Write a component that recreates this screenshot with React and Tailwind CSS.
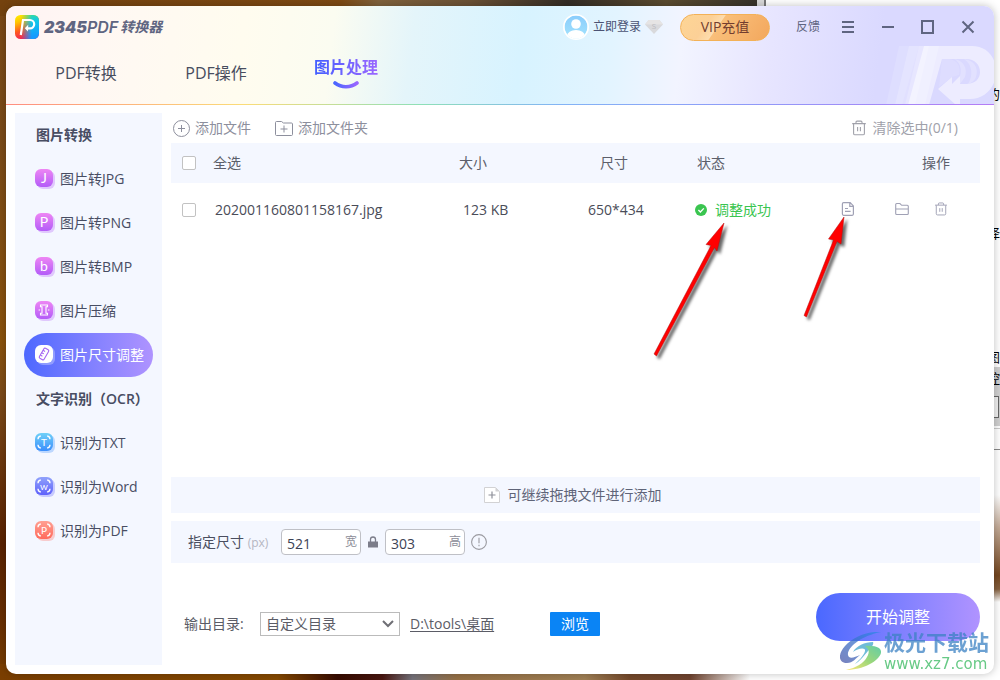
import { useState } from 'react';
import clsx from 'clsx';

const imageTools = [
    { id: 'jpg', label: '图片转JPG', glyph: 'J', from: '#ee86f4', to: '#b35cf8' },
    { id: 'png', label: '图片转PNG', glyph: 'P', from: '#ee86f4', to: '#b35cf8' },
    { id: 'bmp', label: '图片转BMP', glyph: 'b', from: '#ee86f4', to: '#b35cf8' },
    { id: 'compress', label: '图片压缩', glyph: 'compress', from: '#ee86f4', to: '#b35cf8' },
    { id: 'resize', label: '图片尺寸调整', glyph: 'ruler', from: '#ffffff', to: '#ffffff' },
];

const ocrTools = [
    { id: 'txt', label: '识别为TXT', glyph: 'T', from: '#6fd0f8', to: '#3b8efc', frame: true },
    { id: 'word', label: '识别为Word', glyph: 'w', from: '#90a2fb', to: '#5f62fb', frame: true },
    { id: 'pdf', label: '识别为PDF', glyph: 'P', from: '#ffa093', to: '#ff6b5c', frame: true },
];

const files = [{ name: '202001160801158167.jpg', size: '123 KB', dims: '650*434', status: '调整成功' }];

const ToolIcon = ({ tool }) => (
    <svg className="size-5 shrink-0" viewBox="0 0 20 20" fill="none" aria-hidden="true">
        <defs>
            <linearGradient id={`tool-${tool.id}`} x1="0" y1="0" x2="0" y2="1">
                <stop offset="0" stopColor={tool.from} />
                <stop offset="1" stopColor={tool.to} />
            </linearGradient>
        </defs>
        <rect x="2" y="2" width="18" height="18" rx="6" fill={tool.to} opacity="0.3" />
        <rect width="18" height="18" rx="6" fill={`url(#tool-${tool.id})`} />
        {tool.frame && (
            <path
                d="M3 6.2C3 4.2 4 3.2 5.8 3M12.2 3c1.8.2 2.8 1.2 2.8 3.2M3 11.8c0 2 1 3 2.8 3.2M12.2 15c1.8-.2 2.8-1.2 2.8-3.2"
                stroke="#fff"
                strokeWidth="1.3"
            />
        )}
        {tool.glyph === 'compress' && (
            <g stroke="#fff" strokeWidth="1.1">
                <path d="M5.5 4h7v1.8H11v6.4h1.5V14h-7v-1.800H7V5.800H5.500z" />
                <path d="M3.600 9h1.500M12.900 9h1.500" />
            </g>
        )}
        {tool.glyph === 'ruler' && (
            <g stroke="#a566f2" strokeWidth="1.1" transform="rotate(30 9 9)">
                <rect x="6.3" y="3.3" width="5.4" height="11.4" rx="1.2" />
                <path d="M6.3 6.3h2.4M6.3 9h2.4M6.3 11.7h2.4" />
            </g>
        )}
        {tool.glyph.length === 1 && (
            <text
                x="9"
                y={tool.frame ? 12.5 : 13.6}
                textAnchor="middle"
                fill="#fff"
                className={clsx("font-['Lato',sans-serif]", tool.frame ? 'text-[10px]' : 'text-[14px]')}
            >
                {tool.glyph}
            </text>
        )}
    </svg>
);

const LogoIcon = () => (
    <svg className="size-6" viewBox="0 0 24 24" fill="none" aria-hidden="true">
        <defs>
            <linearGradient id="logo-warm" x1="0" y1="0" x2="0.35" y2="1">
                <stop offset="0" stopColor="#fff200" />
                <stop offset="0.3" stopColor="#ffc400" />
                <stop offset="0.65" stopColor="#ff5a1f" />
                <stop offset="1" stopColor="#f0205a" />
            </linearGradient>
            <linearGradient id="logo-cool" x1="0" y1="0" x2="0.2" y2="1">
                <stop offset="0" stopColor="#3de08c" />
                <stop offset="0.4" stopColor="#12c8e8" />
                <stop offset="1" stopColor="#159bff" />
            </linearGradient>
            <linearGradient id="logo-fade" x1="0.25" y1="0" x2="0.7" y2="0">
                <stop offset="0" stopColor="#fff" stopOpacity="0" />
                <stop offset="1" stopColor="#fff" />
            </linearGradient>
            <mask id="logo-mask">
                <rect width="24" height="24" fill="url(#logo-fade)" />
            </mask>
        </defs>
        <rect width="24" height="24" rx="5.5" fill="url(#logo-warm)" />
        <rect width="24" height="24" rx="5.5" fill="url(#logo-cool)" mask="url(#logo-mask)" />
        <path d="M5.8 20L8 5h7a4.200 4.200 0 010 8.400h-2.500" stroke="#fff" strokeWidth="2.2" />
        <path d="M13.200 9.800L9.800 13.200l3.200 3.400z" fill="#fff" />
    </svg>
);

const HeaderArt = () => (
    <svg className="pointer-events-none absolute right-0 bottom-0 h-[60px] w-[108px]" viewBox="0 0 108 60" fill="#fff" aria-hidden="true">
        <path d="M13 1h20L16 60H0z" opacity="0.13" />
        <path d="M23 1h20L29 60H9z" opacity="0.2" />
        <path d="M33 1h20L39 60H19z" opacity="0.2" />
        <path
            d="M38 1h48c14 0 24 10 24 26S98 54 84 54H74v6h-4L52 44l14-12v7l8-8v8h6c9 0 14-5 14-12S89 14 80 14H56L43 60H22z"
            opacity="0.5"
        />
        <path d="M56 14h8c8 2 11 8 9 16l-7 2-13 10z" opacity="0.12" />
        <path d="M68 14c9 1 14 9 11 18l-5 7v-8c2-7 0-14-6-17z" opacity="0.22" />
        <path d="M78 14c10 1 15 9 12 18-1 3-4 6-8 7 5-8 5-19-4-25z" opacity="0.22" />
    </svg>
);

const TrashIcon = ({ className }) => (
    <svg className={className} viewBox="0 0 16 16" fill="none" stroke="currentColor" strokeWidth="1.1" aria-hidden="true">
        <path d="M1.2 3.6h13.6M5 3.4V2.2C5 1.5 5.4 1.1 6 1.1h4c.6 0 1 .4 1 1.1v1.2" />
        <path d="M2.6 3.8v9.6c0 .9.5 1.4 1.4 1.4h8c.9 0 1.4-.5 1.4-1.4V3.8M6.6 7v4.2M9.4 7v4.2" />
    </svg>
);

// Desktop showing around the edges of the application window
const Desktop = () => (
    <div className="absolute inset-0 overflow-hidden bg-white" aria-hidden="true">
        <div className="absolute inset-y-0 left-0 w-4 bg-[linear-gradient(180deg,#7b4715_0%,#7a4a18_20%,#8a520c_50%,#7c4a18_58%,#5a2200_80%,#6a3000_92%,#7a3f00_100%)]" />
        <div className="absolute top-0 left-0 h-4 w-[757px] bg-[linear-gradient(90deg,#74420f_0%,#7d4913_45%,#80623c_50%,#6b5135_62%,#332c25_75%,#5b4b30_88%,#37332b_100%)]" />
        <div className="absolute top-0 left-[757px] h-4 w-[9px] border-r-2 border-[#777] bg-[#d9d9d9]" />
        <div className="absolute bottom-0 left-0 h-4 w-[750px] bg-[linear-gradient(90deg,#7a3e00_0%,#854900_37%,#380b00_45%,#4a1711_51%,#75727a_55%,#967045_61%,#a08055_78%,#74482a_84%,#704430_92%,#fff_100%)]" />
        <div className="absolute right-0 bottom-[78px] h-[107px] w-4 bg-[linear-gradient(180deg,#fff_0%,#c4ab97_30%,#74461f_75%,#85603f_88%,#fff_100%)]" />
        <div className="absolute top-[367px] right-0 h-[59px] w-4 bg-[#d0d0d0]" />
        <div className="absolute top-[396px] right-px h-[22px] w-4 border border-[#666] bg-[#f0f0f0]" />
        <div className="absolute top-[428px] right-0 h-[22px] w-4 border-y border-t-[#ccc] border-b-[#888] bg-white" />
        <div className="absolute inset-y-0 right-0 text-[13px] leading-4 text-black">
            <span className="absolute top-[86px] right-0">的</span>
            <span className="absolute top-[225px] right-0">择</span>
            <span className="absolute top-[349px] right-0">图</span>
            <span className="absolute top-[370px] right-0">控</span>
        </div>
    </div>
);

const TitleBar = () => (
    <div className="flex h-[42px] items-center pr-3.5 pl-[9px] text-[#5f6581]">
        <LogoIcon />
        <h1 className="ml-[5px] flex items-center text-sm font-bold italic">
            <span className="font-['Inter',sans-serif] text-base font-black">2345</span>
            <span className="font-['Inter',sans-serif] text-base font-semibold">PDF</span>
            <span className="ml-0.5">转换器</span>
        </h1>
        <button type="button" className="ml-auto flex items-center gap-1 text-xs text-[#4b5273]">
            <svg className="size-[26px]" viewBox="0 0 26 26" aria-hidden="true">
                <defs>
                    <linearGradient id="avatar" x1="0" y1="0" x2="0" y2="1">
                        <stop offset="0" stopColor="#8bcdfc" />
                        <stop offset="1" stopColor="#a3e3fd" />
                    </linearGradient>
                    <clipPath id="avatar-clip">
                        <circle cx="13" cy="13" r="11.5" />
                    </clipPath>
                </defs>
                <circle cx="13" cy="13" r="13" fill="#fff" />
                <g clipPath="url(#avatar-clip)">
                    <circle cx="13" cy="13" r="11.5" fill="url(#avatar)" />
                    <circle cx="13" cy="10" r="4.8" fill="#fff" />
                    <ellipse cx="13" cy="22" rx="9" ry="6" fill="#fff" />
                </g>
            </svg>
            立即登录
            <svg className="h-3.5 w-[18px]" viewBox="0 0 18 14" aria-hidden="true">
                <path d="M3.500 0h11L18 4.500 9 14 0 4.500z" fill="#d9d9dc" />
                <path d="M3.500 0h11L18 4.500H0z" fill="#e6e4e4" />
                <text x="9" y="9" textAnchor="middle" fill="#bcbcc0" className="text-[8px]">
                    S
                </text>
            </svg>
        </button>
        <button
            type="button"
            className="ml-[17px] h-[27px] w-[90px] rounded-full border border-[#f3b157] bg-[linear-gradient(125deg,#fdd595_0%,#fcd097_30%,#fddcae_42%,#f9bf7a_43%,#f3a75d_100%)] text-sm text-[#733d2f]"
        >
            VIP充值
        </button>
        <button type="button" className="ml-[26px] text-xs">
            反馈
        </button>
        <div className="ml-4 flex gap-4">
            <button type="button" aria-label="菜单" className="size-6">
                <svg viewBox="0 0 24 24" stroke="currentColor" strokeWidth="2" aria-hidden="true">
                    <path d="M6 7h12M6 12h12M6 17h12" />
                </svg>
            </button>
            <button type="button" aria-label="最小化" className="size-6">
                <svg viewBox="0 0 24 24" stroke="currentColor" strokeWidth="2" aria-hidden="true">
                    <path d="M6 12h12" />
                </svg>
            </button>
            <button type="button" aria-label="最大化" className="size-6">
                <svg viewBox="0 0 24 24" fill="none" stroke="currentColor" strokeWidth="2" aria-hidden="true">
                    <path d="M6 6h11v12H6z" />
                </svg>
            </button>
            <button type="button" aria-label="关闭" className="size-6">
                <svg viewBox="0 0 24 24" stroke="currentColor" strokeWidth="2" aria-hidden="true">
                    <path d="M6.5 6.5l11 11M17.5 6.5l-11 11" />
                </svg>
            </button>
        </div>
    </div>
);

const Header = () => (
    <header className="relative shrink-0 overflow-hidden rounded-t-[10px] bg-[linear-gradient(97deg,#fff3f3_0%,#fff8f3_10%,#fffcef_24%,#fbfcf1_33%,#e4f5fa_41%,#d7f3ff_52%,#e2f4ff_61%,#f2f4ff_68%,#e7e5ff_77%,#dad9ff_88%,#dad9ff_100%)]">
        <HeaderArt />
        <div className="relative">
            <TitleBar />
            <nav className="flex h-14 gap-[66px] pl-12 text-base text-[#484d5e]">
                <button type="button" className="mt-[13px] h-6 w-16 whitespace-nowrap">
                    PDF转换
                </button>
                <button type="button" className="mt-[13px] h-6 w-16 whitespace-nowrap">
                    PDF操作
                </button>
                <button type="button" className="mt-[7px] flex h-9 w-16 flex-col items-center font-bold whitespace-nowrap">
                    <span className="bg-linear-to-r from-[#3f5dff] to-[#9a66ff] bg-clip-text leading-6 text-transparent">图片处理</span>
                    <svg className="mt-0.5 h-2 w-[26px] shrink-0" viewBox="0 0 26 8" fill="none" aria-hidden="true">
                        <defs>
                            <linearGradient id="smile">
                                <stop offset="0" stopColor="#4a66ff" />
                                <stop offset="1" stopColor="#9a66ff" />
                            </linearGradient>
                        </defs>
                        <path d="M2 2c6.5 5 15.5 5 22 0" stroke="url(#smile)" strokeWidth="3.6" strokeLinecap="round" />
                    </svg>
                </button>
            </nav>
        </div>
        <div className="relative h-px bg-[linear-gradient(90deg,#ff8d80,#fbdc78_24%,#8ee0b8_42%,#83b4f5_56%,#8f9af8_75%,#b47cf5)]" />
    </header>
);

const SidebarGroup = ({ title, tools, current, onSelect }) => (
    <section>
        <h2 className="pl-[21px] text-sm leading-[44px] font-semibold whitespace-nowrap">{title}</h2>
        <ul>
            {tools.map((tool) => (
                <li key={tool.id} className="px-[9px]">
                    <button
                        type="button"
                        onClick={() => onSelect(tool.id)}
                        className={clsx(
                            'flex h-11 w-full items-center gap-[5px] rounded-full pl-[11px] text-sm whitespace-nowrap',
                            current === tool.id && 'bg-linear-to-r from-[#4d68ff] to-[#af93ff] text-white'
                        )}
                    >
                        <ToolIcon tool={tool} />
                        {tool.label}
                    </button>
                </li>
            ))}
        </ul>
    </section>
);

const FileTable = () => (
    <table className="w-full table-fixed text-left text-sm">
        <colgroup>
            <col className="w-[42px]" />
            <col />
            <col className="w-[129px]" />
            <col className="w-[107px]" />
            <col className="w-[145px]" />
            <col className="w-[140px]" />
        </colgroup>
        <thead>
            <tr className="h-10 bg-[#f4f7ff] text-[#5c5f6b]">
                <th className="pl-[11px]">
                    <input
                        id="select-all"
                        type="checkbox"
                        className="block size-3.5 appearance-none rounded-xs border border-[#c2c2c2] bg-white checked:bg-[#5a6cff]"
                    />
                </th>
                <th className="font-normal">
                    <label htmlFor="select-all">全选</label>
                </th>
                <th className="font-normal">大小</th>
                <th className="pl-3 font-normal">尺寸</th>
                <th className="pl-0.5 font-normal">状态</th>
                <th className="pr-[30px] text-right font-normal">操作</th>
            </tr>
        </thead>
        <tbody>
            {files.map((file) => (
                <tr key={file.name} className="h-[54px] text-[#4a4c58]">
                    <td className="pl-[11px]">
                        <input
                            type="checkbox"
                            aria-label={file.name}
                            className="block size-3.5 appearance-none rounded-xs border border-[#c2c2c2] bg-white checked:bg-[#5a6cff]"
                        />
                    </td>
                    <td className="pl-0.5">{file.name}</td>
                    <td className="pl-1">{file.size}</td>
                    <td>{file.dims}</td>
                    <td>
                        <span className="flex items-center gap-2 text-[#3ac550]">
                            <svg className="size-3" viewBox="0 0 12 12" fill="none" aria-hidden="true">
                                <circle cx="6" cy="6" r="6" fill="#3ac550" />
                                <path d="M3.4 6l2 2 3.4-3.6" stroke="#fff" strokeWidth="1.3" />
                            </svg>
                            {file.status}
                        </span>
                    </td>
                    <td>
                        <div className="flex items-center pb-0.5 pl-px text-[#a0a1b5]">
                            <button type="button" aria-label="打开文件">
                                <svg className="size-3.5" viewBox="0 0 14 14" fill="none" stroke="currentColor" strokeWidth="1.2" aria-hidden="true">
                                    <path d="M2.6.7h6.600l3.200 3.200v8.200c0 .8-.4 1.200-1.200 1.200H2.600c-.8 0-1.200-.4-1.200-1.200V1.900c0-.8.4-1.200 1.200-1.200zM8.800.9v3.400h3.400M4 6.500h3M4 9.300h5.600" />
                                </svg>
                            </button>
                            <button type="button" aria-label="打开文件夹" className="ml-10">
                                <svg className="size-3.5" viewBox="0 0 14 14" fill="none" stroke="currentColor" strokeWidth="1.1" aria-hidden="true">
                                    <path d="M.7 11.500v-9c0-.6.300-1 1-1h3.200l1.800 1.800h5.600c.6 0 1 .4 1 1v7.200c0 .6-.4 1-1 1H1.700c-.7 0-1-.4-1-1zM.7 7h12.600" />
                                </svg>
                            </button>
                            <button type="button" aria-label="删除" className="ml-[25px]">
                                <TrashIcon className="size-3.5" />
                            </button>
                        </div>
                    </td>
                </tr>
            ))}
        </tbody>
    </table>
);

const SizeInput = ({ id, label, value, onChange }) => (
    <div className="flex h-[26px] w-20 items-center rounded-sm border border-[#bfc0c6] bg-white pr-[3px] pl-[5px]">
        <input
            id={id}
            type="text"
            value={value}
            onChange={(e) => onChange(e.target.value)}
            className="min-w-0 flex-1 pt-1 text-sm text-[#3c4254] outline-none"
        />
        <label htmlFor={id} className="text-xs text-[#8c8d98]">
            {label}
        </label>
    </div>
);

const Annotations = () => (
    <svg className="pointer-events-none absolute top-0 left-0" width="1000" height="680" fill="none" aria-hidden="true">
        <defs>
            <filter id="arrow-shadow" x="-20%" y="-20%" width="150%" height="150%" colorInterpolationFilters="sRGB">
                <feDropShadow dx="3" dy="3" stdDeviation="1.5" floodColor="#000" floodOpacity="0.6" />
            </filter>
        </defs>
        <g filter="url(#arrow-shadow)" fill="#ff0000" stroke="#b01010" strokeWidth="0.5">
            <path d="M724 223L706 244.5L711 245.500L654 354L656.500 356L714.500 247.500L717 251z" />
            <path d="M844 217L828.500 239L833.500 240L804 315.500L806.500 317L837 241.500L841 244z" />
        </g>
    </svg>
);

const SiteMark = () => (
    <div className="pointer-events-none absolute right-[11px] bottom-1 flex items-start gap-0.5 opacity-75">
        <svg className="h-10 w-[42px]" viewBox="0 0 42 40" aria-hidden="true">
            <defs>
                <linearGradient id="mark-blue" x1="0" y1="1" x2="1" y2="0">
                    <stop offset="0" stopColor="#4c58a8" />
                    <stop offset="1" stopColor="#2a8ae8" />
                </linearGradient>
                <linearGradient id="mark-green" x1="0" y1="1" x2="1" y2="0">
                    <stop offset="0" stopColor="#ffe04a" />
                    <stop offset="0.5" stopColor="#7cca4e" />
                    <stop offset="1" stopColor="#2fbd8a" />
                </linearGradient>
            </defs>
            <path d="M41 0C27-1 13 5 5 14c-8 9-6 17 2 17 6 0 9-5 13-8-5 2-11 5-12 0C7 16 20 4 41 0z" fill="url(#mark-blue)" />
            <path d="M33 10c-8 0-17 4-20 10 5-4 13-5 12-1-1 5-8 11-10 13 4-2 8-7 13-13 4-4 6-7 5-9z" fill="#40a5cc" />
            <path d="M25 14c11-1 17 2 16 7-2 8-18 17-35 17 10-2 18-7 21-13 3-5 2-8-2-11z" fill="url(#mark-green)" />
        </svg>
        <div className="font-bold">
            <p className="text-[21px] leading-5 text-[#3c82c4]">极光下载站</p>
            <p className="font-['DejaVu_Sans',sans-serif] text-[15px] leading-6 font-normal text-[#35b85d]">www.xz7.com</p>
        </div>
    </div>
);

const App = () => {
    const [current, setCurrent] = useState('resize');
    const [width, setWidth] = useState('521');
    const [height, setHeight] = useState('303');

    return (
        <div className="relative flex min-h-screen p-1.5 font-['Open_Sans','Noto_Sans_CJK_SC',sans-serif]">
            <Desktop />
            <div className="relative flex min-w-0 flex-1 flex-col rounded-[10px] bg-white shadow-[0_0_8px_rgba(0,0,0,0.25)]">
                <Header />

                <div className="flex flex-1 gap-[9px] pt-2 pr-3.5 pl-[9px]">
                    <aside className="mb-[9px] w-[147px] shrink-0 bg-[#f4f7ff] text-[#484d63]">
                        <SidebarGroup title="图片转换" tools={imageTools} current={current} onSelect={setCurrent} />
                        <SidebarGroup title="文字识别（OCR）" tools={ocrTools} current={current} onSelect={setCurrent} />
                    </aside>

                    <main className="flex min-w-0 flex-1 flex-col pb-[33px]">
                        {/* Toolbar */}
                        <div className="flex h-[30px] items-center gap-6 pr-[22px] pl-0.5 text-sm text-[#8d8f9d]">
                            <button type="button" className="flex items-center gap-[5px]">
                                <svg className="size-[17px]" viewBox="0 0 17 17" fill="none" stroke="currentColor" aria-hidden="true">
                                    <circle cx="8.5" cy="8.5" r="8" />
                                    <path d="M8.5 5v7M5 8.5h7" />
                                </svg>
                                添加文件
                            </button>
                            <button type="button" className="flex items-center gap-[5px]">
                                <svg className="h-[17px] w-[18px]" viewBox="0 0 18 17" fill="none" stroke="currentColor" aria-hidden="true">
                                    <path d="M.5 14V2.500c0-.6.400-1 1-1h5l2 1.500h8c.6 0 1 .4 1 1v10.500c0 .6-.4 1-1 1h-15c-.6 0-1-.4-1-1zM9 5.500v7M5.500 9h7" />
                                </svg>
                                添加文件夹
                            </button>
                            <button type="button" className="ml-auto flex items-center gap-1.5 text-[#a0a1aa]">
                                <TrashIcon className="size-4" />
                                清除选中(0/1)
                            </button>
                        </div>

                        <div className="flex-1">
                            <FileTable />
                        </div>

                        <button type="button" className="flex h-9 w-full items-center justify-center gap-2 bg-[#f4f7ff] pr-1.5 text-sm text-[#5f6478]">
                            <svg className="size-4" viewBox="0 0 16 16" fill="none" aria-hidden="true">
                                <path d="M.5.5h11l4 4v11H.5z" fill="#fff" stroke="#d2d2d4" />
                                <path d="M11.5.5v4h4z" fill="#d2d2d4" />
                                <path d="M8 4.5v7M4.5 8h7" stroke="#8e9099" strokeWidth="1.2" />
                            </svg>
                            可继续拖拽文件进行添加
                        </button>

                        {/* Target size */}
                        <div className="mt-2 flex h-[42px] items-center bg-[#f4f7ff] pl-[17px] text-sm text-[#4a4e60]">
                            <span className="w-[93px]">
                                指定尺寸 <span className="text-xs text-[#b4b6c2]">(px)</span>
                            </span>
                            <SizeInput id="width" label="宽" value={width} onChange={setWidth} />
                            <svg className="mx-[7px] h-3 w-2.5" viewBox="0 0 10 12" fill="none" aria-hidden="true">
                                <path d="M2.5 6V3.500a2.500 2.500 0 015 0V6" stroke="#7c7d8a" strokeWidth="1.3" />
                                <rect y="5.5" width="10" height="6" fill="#7c7d8a" />
                            </svg>
                            <SizeInput id="height" label="高" value={height} onChange={setHeight} />
                            <button type="button" aria-label="说明" className="ml-1.5 text-[#9a9aa0]">
                                <svg className="size-4" viewBox="0 0 16 16" fill="none" stroke="currentColor" strokeWidth="1.1" aria-hidden="true">
                                    <circle cx="8" cy="8" r="7.4" />
                                    <path d="M8 3.8v5.400M8 10.800v1.400" />
                                </svg>
                            </button>
                        </div>

                        {/* Output folder */}
                        <div className="mt-[30px] flex items-end justify-between pl-[13px] text-sm text-[#5b5c66]">
                            <div className="mb-[5px] flex items-center">
                                <label htmlFor="output" className="w-[76px]">
                                    输出目录:
                                </label>
                                <div className="relative">
                                    <select id="output" className="block h-6 w-[140px] appearance-none border border-[#bbb] bg-white pl-[5px] text-sm outline-none">
                                        <option>自定义目录</option>
                                        <option>原文件目录</option>
                                    </select>
                                    <svg
                                        className="pointer-events-none absolute top-2 right-1.5 h-2 w-3"
                                        viewBox="0 0 12 8"
                                        fill="none"
                                        stroke="#6f6f75"
                                        strokeWidth="2"
                                        aria-hidden="true"
                                    >
                                        <path d="M1 1l5 5 5-5" />
                                    </svg>
                                </div>
                                <a href="#output" className="ml-2.5 w-[140px] underline underline-offset-2">
                                    D:\tools\桌面
                                </a>
                                <button type="button" className="h-6 w-[50px] rounded-[1px] bg-[#0a84f5] text-white">
                                    浏览
                                </button>
                            </div>
                            <button type="button" className="h-12 w-[164px] rounded-full bg-linear-to-r from-[#4a68ff] to-[#b093ff] text-base text-white">
                                开始调整
                            </button>
                        </div>
                    </main>
                </div>
            </div>
            <Annotations />
            <SiteMark />
        </div>
    );
};

export default App;
